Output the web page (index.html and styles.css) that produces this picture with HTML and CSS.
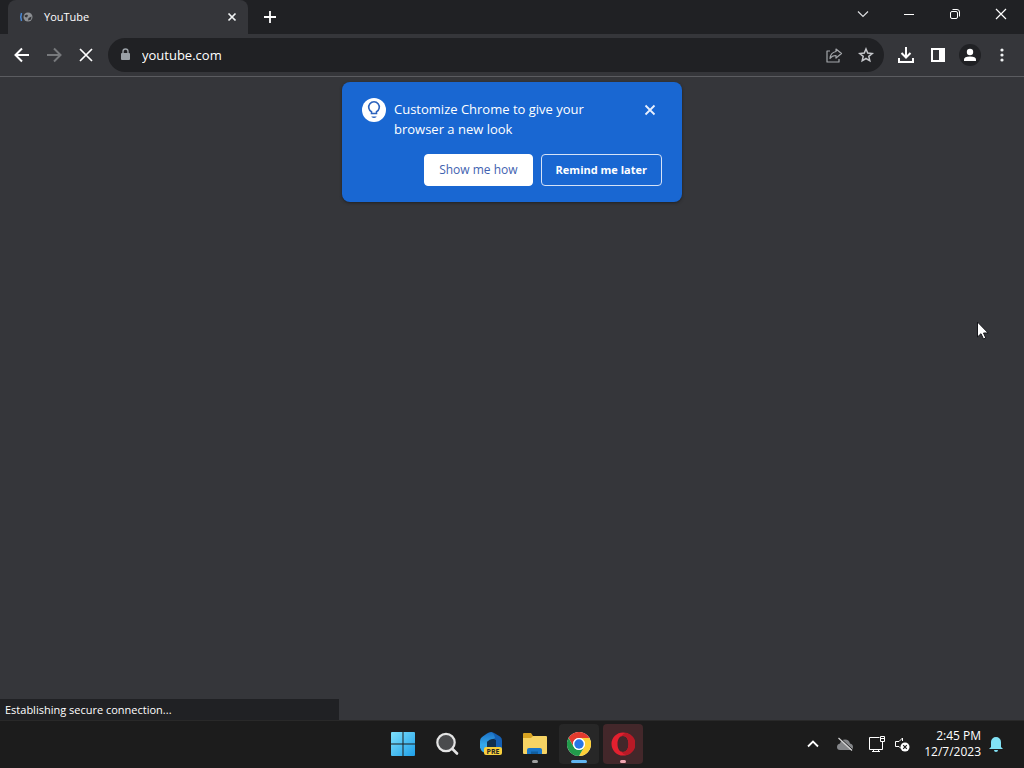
FILE: index.html
```html
<!DOCTYPE html>
<html lang="en">
<head>
    <meta charset="UTF-8">
    <meta name="viewport" content="width=device-width, initial-scale=1.0">
    <title>YouTube</title>
    <link rel="stylesheet" href="styles.css">
</head>
<body>
    <!-- Tab strip and window controls -->
    <header class="tabstrip">
        <div class="tab">
            <svg class="favicon" width="16" height="16" viewBox="0 0 16 16">
                <path d="M3.500 4Q2 8 3.500 12" fill="none" stroke="#4a8ad8" stroke-width="1.500"/>
                <circle cx="10" cy="8" r="4.500" fill="#8d9094"/>
                <path d="M6.500 6.500L9 5.500 10 6.500 9 8.500 7 8zM10.500 9L13.500 7.500 13 10.500 10 11.500z" fill="#35363a"/>
            </svg>
            <span class="tab-title">YouTube</span>
            <button class="icon-button tab-close" aria-label="Close tab">
                <svg width="16" height="16" viewBox="0 0 16 16"><path d="M4.500 4.500l7 7m0-7l-7 7" stroke="#f1f3f4" stroke-width="1.700"/></svg>
            </button>
        </div>
        <button class="icon-button new-tab" aria-label="New tab">
            <svg width="16" height="16" viewBox="0 0 16 16"><path d="M8 2v12M2 8h12" stroke="#fff" stroke-width="1.800"/></svg>
        </button>
        <div class="window-controls">
            <button class="icon-button" aria-label="Search tabs">
                <svg width="16" height="16" viewBox="0 0 16 16"><path d="M3 5.500l5 5 5-5" fill="none" stroke="#dcdde0" stroke-width="1.200"/></svg>
            </button>
            <button class="icon-button" aria-label="Minimize">
                <svg width="16" height="16" viewBox="0 0 16 16"><path d="M3 8.500h10" stroke="#fff"/></svg>
            </button>
            <button class="icon-button" aria-label="Restore">
                <svg width="16" height="16" viewBox="0 0 16 16" fill="none" stroke="#fff"><rect x="3.500" y="5.500" width="7" height="7" rx="1.500"/><path d="M5.500 3.500h4.500q2.500 0 2.500 2.500v4.500"/></svg>
            </button>
            <button class="icon-button" aria-label="Close">
                <svg width="16" height="16" viewBox="0 0 16 16"><path d="M3 3l10 10M13 3L3 13" stroke="#fff" stroke-width="1.200"/></svg>
            </button>
        </div>
    </header>

    <!-- Toolbar -->
    <nav class="toolbar">
        <button class="icon-button" aria-label="Back">
            <svg width="20" height="20" viewBox="0 0 20 20" fill="none" stroke="#fff" stroke-width="2"><path d="M17 10H4M10 3.500L3.500 10l6.500 6.500"/></svg>
        </button>
        <button class="icon-button" aria-label="Forward">
            <svg width="20" height="20" viewBox="0 0 20 20" fill="none" stroke="#77797c" stroke-width="2"><path d="M3 10h13M10 3.500l6.500 6.500-6.500 6.500"/></svg>
        </button>
        <button class="icon-button" aria-label="Stop">
            <svg width="20" height="20" viewBox="0 0 20 20"><path d="M4 4l12 12m0-12l-12 12" stroke="#fff" stroke-width="1.700"/></svg>
        </button>
        <div class="omnibox">
            <svg width="16" height="16" viewBox="0 0 16 16"><rect x="4" y="6" width="9" height="7" rx="1" fill="#9aa0a6"/><path d="M6 6V4.500a2.500 2.500 0 0 1 5 0V6" fill="none" stroke="#9aa0a6" stroke-width="1.400"/></svg>
            <input type="text" class="address" value="youtube.com" aria-label="Address">
            <button class="icon-button" aria-label="Share">
                <svg width="18" height="18" viewBox="0 0 18 18" fill="none" stroke="#a4a7ab" stroke-width="1.200" stroke-linejoin="round"><path d="M5 5H2v11h12v-3"/><path d="M11 3l5.500 4.500L11 12V9.500Q7 9.500 5 12.500 5.500 6.500 11 5.500z"/></svg>
            </button>
            <button class="icon-button" aria-label="Bookmark">
                <svg width="18" height="18" viewBox="0 0 18 18" fill="none" stroke="#c4c6ca" stroke-width="1.500"><path d="M9 3l1.700 4.100 4.500.400-3.400 2.900 1 4.400L9 12.500l-3.800 2.300 1-4.400-3.400-2.900 4.500-.400z"/></svg>
            </button>
        </div>
        <button class="icon-button" aria-label="Downloads">
            <svg width="20" height="20" viewBox="0 0 20 20" fill="none" stroke="#fff" stroke-width="2"><path d="M10 2v10M5.500 8L10 12.500 14.500 8M3 13v4h14v-4"/></svg>
        </button>
        <button class="icon-button" aria-label="Side panel">
            <svg width="20" height="20" viewBox="0 0 20 20"><path fill="#fff" fill-rule="evenodd" d="M3 3h14v14H3zM5 5v10h6V5z"/></svg>
        </button>
        <button class="icon-button" aria-label="Profile">
            <svg width="22" height="22" viewBox="0 0 22 22"><circle cx="11" cy="11" r="11" fill="#202124"/><circle cx="11" cy="8" r="3.200" fill="#fff"/><path d="M5 17v-1.500Q5 12.500 11 12.500t6 3V17z" fill="#fff"/></svg>
        </button>
        <button class="icon-button" aria-label="Menu">
            <svg width="20" height="20" viewBox="0 0 20 20" fill="#f1f3f4"><circle cx="10" cy="5" r="1.600"/><circle cx="10" cy="10" r="1.600"/><circle cx="10" cy="15" r="1.600"/></svg>
        </button>
    </nav>

    <!-- Page area, still loading -->
    <main class="page">
        <section class="bubble">
            <div class="bubble-top">
                <svg width="24" height="24" viewBox="0 0 24 24"><circle cx="12" cy="12" r="12" fill="#fff"/><path d="M9.500 15.500v-1.800a5.300 5.300 0 1 1 5 0v1.800z" fill="none" stroke="#2b62bd" stroke-width="1.600"/><path d="M9.500 18.500h5v.500q-2.500 2-5 0z" fill="#2b62bd"/></svg>
                <p class="bubble-text">Customize Chrome to give your browser a new look</p>
                <button class="icon-button" aria-label="Dismiss">
                    <svg width="16" height="16" viewBox="0 0 16 16"><path d="M3.500 3.500l9 9m0-9l-9 9" stroke="#e8f0fe" stroke-width="1.800"/></svg>
                </button>
            </div>
            <div class="bubble-actions">
                <button class="bubble-button primary">Show me how</button>
                <button class="bubble-button">Remind me later</button>
            </div>
        </section>
        <div class="status">Establishing secure connection...</div>
        <svg class="cursor" width="12" height="19" viewBox="0 0 12 19"><path d="M.500 1v15l3.500-3.300L6.500 18l2.300-1-2.300-5h4.700z" fill="#fff" stroke="#15161a"/></svg>
    </main>

    <footer class="taskbar">
        <div class="apps">
            <button class="app" aria-label="Start">
                <svg width="24" height="24" viewBox="0 0 24 24">
                    <defs><linearGradient id="start" x1="0" y1="0" x2="24" y2="24" gradientUnits="userSpaceOnUse"><stop stop-color="#7ee0fb"/><stop offset="1" stop-color="#1e9fe8"/></linearGradient></defs>
                    <path fill="url(#start)" d="M1 0h10.500v11.500H0V1q0-1 1-1zM12.500 0H23q1 0 1 1v10.500H12.500zM0 12.500h11.500V24H1q-1 0-1-1zM12.500 12.500H24V23q0 1-1 1H12.500z"/>
                </svg>
            </button>
            <button class="app" aria-label="Search">
                <svg width="24" height="24" viewBox="0 0 24 24"><circle cx="11" cy="10.500" r="8.700" fill="#4a4b4d" stroke="#e4e4e4" stroke-width="2.200"/><path d="M17.500 17L22 21.500" stroke="#e4e4e4" stroke-width="2.600" stroke-linecap="round"/></svg>
            </button>
            <button class="app" aria-label="Copilot preview">
                <svg width="24" height="24" viewBox="0 0 24 24">
                    <defs><linearGradient id="copilot" x1="0" y1="0" x2="0" y2="1"><stop stop-color="#1b6fc4"/><stop offset="1" stop-color="#3cb8f5"/></linearGradient></defs>
                    <path d="M12 0q2 0 4 1.500l5 3q2 1.500 2 4V17h-6V9l-5-4z" fill="#1560b4"/>
                    <path d="M12 0q-2 0-4 1.500L3 5Q1 6.500 1 9v7l7 0V10l8-4q-1-5-4-6z" fill="url(#copilot)"/>
                    <path d="M1 14q4-2 7 0l5 4-3 5-6-3q-3-2-3-6z" fill="#35a6ea"/>
                    <path d="M8 10q4-5 9-2v7H8z" fill="#12304f"/>
                    <rect x="5" y="15" width="18" height="8" rx="2" fill="#f8cf3d"/>
                    <text class="pre" x="14" y="22" text-anchor="middle">PRE</text>
                </svg>
            </button>
            <button class="app running" aria-label="File Explorer">
                <svg width="26" height="24" viewBox="0 0 26 24">
                    <path d="M1 2q0-1 1-1h7l2 3v5H1z" fill="#d8a321"/>
                    <path d="M1 6h8l2-2h13q1 0 1 1v16q0 1-1 1H2q-1 0-1-1z" fill="#f6d363"/>
                    <path d="M5 22v-4q0-2 2-2h11q2 0 2 2v4z" fill="#1976c9"/><path d="M9 19.500h7V22H9z" fill="#115e9f"/>
                </svg>
            </button>
            <button class="app running active" aria-label="Chrome">
                <svg width="24" height="24" viewBox="0 0 24 24">
                    <circle cx="12" cy="12" r="12" fill="#fff"/>
                    <path d="M1.600 6A12 12 0 0 1 22.400 6H12a6 6 0 0 0-5.200 9z" fill="#e33b2e"/>
                    <path d="M22.400 6A12 12 0 0 1 12 24l5.200-9A6 6 0 0 0 12 6z" fill="#fdd038"/>
                    <path d="M12 24A12 12 0 0 1 1.600 6l5.200 9a6 6 0 0 0 10.400 0z" fill="#229b4b"/>
                    <circle cx="12" cy="12" r="6" fill="#fff"/><circle cx="12" cy="12" r="4.700" fill="#2876e6"/>
                </svg>
            </button>
            <button class="app running alert" aria-label="Opera">
                <svg width="24" height="24" viewBox="0 0 24 24">
                    <path fill="#e3202f" fill-rule="evenodd" d="M12 .500a11.500 11.500 0 1 0 0 23 11.500 11.500 0 0 0 0-23zM12 4c3.500 0 5.500 3.500 5.500 8s-2 8-5.500 8-5.500-3.500-5.500-8 2-8 5.500-8z"/>
                    <path fill="#b81a26" d="M16 .900a11.500 11.500 0 0 1 0 22.200q-3 .500-6-3.500c5 1.400 7.500-2.600 7.500-7.600S15 3 10 4.400q3-4 6-3.500z"/>
                </svg>
            </button>
        </div>
        <div class="tray">
            <svg width="16" height="16" viewBox="0 0 16 16"><path d="M3 10.500l5-5 5 5" fill="none" stroke="#fff" stroke-width="1.800"/></svg>
            <svg class="cloud" width="18" height="16" viewBox="0 0 18 16"><path d="M4 14q-3 0-3-3t3-3.500Q5 3.500 9 3.500t5 4q3 .500 3 3.500t-3 3z" fill="#85878a"/><path d="M3.500 1.500l13 12" stroke="#1c1c1c"/><path d="M2.500 2l13.500 12.500" stroke="#d5d5d5" stroke-width="1.200"/></svg>
            <svg width="18" height="18" viewBox="0 0 18 18" fill="none" stroke="#fff"><path d="M11.500 2.500h-10v12h13V9M5.500 14.500v2M10.500 14.500v2M4 16.500h8"/><path d="M12.500 1.500h4v5h-4zM12.500 3.500h4M14.500 6.500V10"/></svg>
            <svg class="speaker" width="16" height="16" viewBox="0 0 16 16"><path d="M8.500 5V2L5 5.500H1.500v5H5L7 12.500" fill="none" stroke="#fff"/><circle cx="11" cy="11" r="4.500" fill="#fff"/><path d="M9.200 9.200l3.600 3.600m0-3.600l-3.600 3.600" stroke="#1c1c1c" stroke-width="1.200"/></svg>
            <div class="clock"><time>2:45 PM</time><time>12/7/2023</time></div>
            <svg width="16" height="16" viewBox="0 0 16 16" fill="#82e2f5"><path d="M3 11V6a5 5 0 0 1 10 0v5l2 2H1zM6 14h4q0 2-2 2t-2-2z"/></svg>
        </div>
    </footer>
</body>
</html>
```
FILE: styles.css
```css
* {
    box-sizing: border-box;
}
body {
    margin: 0;
    min-height: 100vh;
    display: flex;
    flex-direction: column;
    background-color: #35363a;
    color: #fff;
    font-family: "Open Sans", "Noto Sans", sans-serif;
    font-size: 12px;
}
svg {
    display: block;
    flex: none;
}
button {
    font: inherit;
    color: inherit;
    cursor: pointer;
}
.icon-button {
    display: flex;
    flex: none;
    align-items: center;
    justify-content: center;
    padding: 0;
    border: none;
    background: none;
}
.tabstrip {
    display: flex;
    height: 34px;
    padding-left: 8px;
    background-color: #202124;
}
.tab {
    display: flex;
    align-items: center;
    width: 240px;
    padding: 0 8px 0 10px;
    border-radius: 8px 8px 0 0;
    background-color: #35363a;
}
.tab-title {
    flex: 1;
    margin-left: 10px;
    font-size: 11px;
    line-height: 16px;
}
.new-tab {
    width: 44px;
}
.window-controls {
    display: flex;
    height: 28px;
    margin-left: auto;
}
.window-controls .icon-button {
    width: 46px;
}
.toolbar {
    display: flex;
    align-items: center;
    height: 43px;
    padding: 0 6px;
    border-bottom: 1px solid #5b5c60;
}
.toolbar .icon-button {
    width: 32px;
    height: 32px;
}
.omnibox {
    display: flex;
    flex: 1;
    align-items: center;
    height: 34px;
    margin: 0 6px;
    padding: 0 2px 0 9px;
    border-radius: 17px;
    background-color: #202124;
}
.address {
    flex: 1;
    min-width: 0;
    padding: 0 9px;
    border: none;
    outline: none;
    background: none;
    color: #fff;
    font: inherit;
    font-size: 13px;
}
.page {
    position: relative;
    flex: 1;
    padding-top: 5px;
}
.bubble {
    width: 340px;
    margin: 0 auto;
    padding: 16px 20px;
    border-radius: 8px;
    background-color: #1967d2;
    box-shadow: 0 1px 3px #202124;
}
.bubble-top {
    display: flex;
    align-items: flex-start;
}
.bubble-text {
    flex: 1;
    margin: 1px 36px 0 8px;
    font-size: 13px;
    line-height: 20px;
}
.bubble-top .icon-button {
    width: 24px;
    height: 24px;
}
.bubble-actions {
    display: flex;
    justify-content: flex-end;
    gap: 8px;
    margin-top: 15px;
}
.bubble-button {
    height: 32px;
    padding: 0 14px;
    border: 1px solid #d5e2f7;
    border-radius: 4px;
    background: none;
    font-size: 11px;
    font-weight: bold;
    line-height: 16px;
}
.bubble-button.primary {
    border-color: #fff;
    background-color: #fff;
    color: #3f62b0;
    font-size: 12px;
    font-weight: normal;
}
.status {
    position: absolute;
    bottom: 0;
    left: 0;
    width: 339px;
    padding-left: 5px;
    background-color: #202124;
    font-size: 11px;
    line-height: 21px;
}
.cursor {
    position: absolute;
    top: 244px;
    right: 35px;
}
.taskbar {
    display: grid;
    grid-template-columns: 1fr auto 1fr;
    align-items: center;
    height: 48px;
    padding-left: 2px;
    background-color: #1c1c1c;
    box-shadow: inset 0 1px #292929;
}
.apps {
    display: flex;
    grid-column: 2;
    gap: 4px;
}
.app {
    position: relative;
    display: flex;
    align-items: center;
    justify-content: center;
    width: 40px;
    height: 40px;
    padding: 0;
    border: none;
    border-radius: 4px;
    background: none;
}
.running::after {
    content: "";
    position: absolute;
    bottom: 1px;
    width: 6px;
    height: 3px;
    border-radius: 2px;
    background-color: #a0a0a0;
}
.active {
    background-color: #272727;
}
.active::after {
    width: 16px;
    background-color: #60b5f0;
}
.alert {
    background-color: #43272a;
}
.alert::after {
    background-color: #f1a6b1;
}
.pre {
    font-size: 7px;
    font-weight: bold;
    fill: #252525;
}
.tray {
    display: flex;
    align-items: center;
    justify-content: flex-end;
    padding-right: 20px;
}
.cloud {
    margin: 0 14px 0 15px;
}
.speaker {
    margin-left: 8px;
}
.clock {
    display: flex;
    flex-direction: column;
    margin: 0 7px 0 14px;
    font-size: 12px;
    line-height: 16px;
    text-align: right;
}
```
